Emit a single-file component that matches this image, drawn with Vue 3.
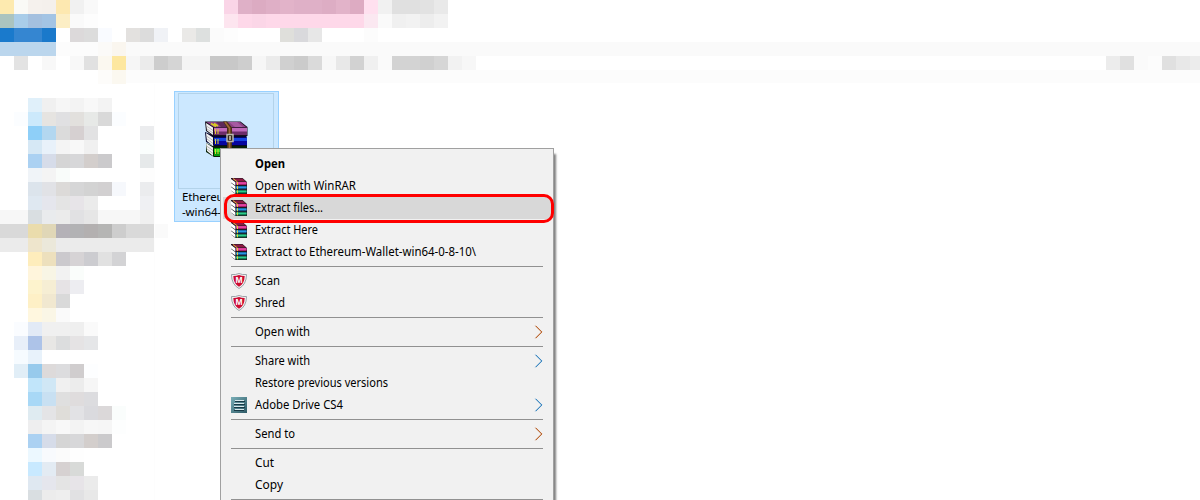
<script setup>
const CELL = 14

// Each run: [row, first column, colours of consecutive cells]
const runs = [
  [0, 0, 'fdeaaf fafaf6 f5f1ed f4f0ec fde8b0 f1f1f1 f9f9f9'],
  [0, 16, 'fad5e7 dfb0c7 dcabc2 dfafc6 e2b3c9 dfb0c7 dfb0c7 ddadc4 e2b3c9 ddabc2 ffe0ef f1f1f1 e0e0e0 e0e0e0 e2e2e2 e9e9e9'],
  [1, 0, 'abc4bf a9cde9 a4c0df a3c4e4 fceec5 fafafa fdfdfd'],
  [1, 16, 'fde5ef fed8e9 fbd6e7 fed8e9 fed8e9 fed8e9 fed8e9 fed8e9 fed8e9 fed8e9 fbe8f1 fafafa f0f0f0 f2f2f2 ededed f2f2f2'],
  [2, 0, '1a7acc 3586d1 3586d1 1a79cb'],
  [2, 5, 'dcd9da dcdcdc f9fbff'],
  [2, 9, 'e3e1df dcdcdc f0f2f6'],
  [2, 13, 'eae9e7 dde0df fbfbfb fdfdfd'],
  [2, 20, 'dfdfdb d9d9dc e7e7e7'],
  [2, 26, 'fcfcfc'],
  [3, 0, 'bbd6ed bbd6ed bbd6ed bbd6ed fcfcfc fcfcfc fcfcfc fbfaf8 faf6ef'],
  [4, 1, 'e3e3e3'],
  [4, 3, 'f8f8f8'],
  [4, 5, 'f8f8f8 e1e1e1 fbf8f0 fde79f f6f6f6 ebebeb cdcdcd d5d5d5 f4f4f4 f4f4f4 c8c8c8 c8c8c8 cecece f6f6f6 ebebeb d0d0d0 cbcbcb dadada f7f7f7 e8e8e8 d2d2d2 f0f0f0 fafafa d3d3d3 d3d3d3 d0d0d0 d6d6d6 f2f2f2 f7f7f7'],
  [4, 79, 'ececec e0e0e0 fafafa fcfcfc e0e0e0 e8e8e8 ececec'],
  [5, 7, 'fdfcfa fbf8f0'],
  [7, 2, 'e0f0fa f0f0f0 f6f6f6 f3f3f3 f8f8f8 f3f3f3'],
  [8, 1, 'fbfdff cce9fb e6e4e1 e0e0e2 e2e0dd e7e9e7 d9d9d9 fbfdff'],
  [9, 2, '8ecff8 b3d7f0 dbdbdb d6d0d1 e2e2e3'],
  [9, 10, 'ebecee'],
  [10, 2, 'd6e8f5 e8f1fa f4f4f4 f8f8f8 f0f0f0'],
  [10, 10, 'fafefd'],
  [11, 2, 'abd1f2 d6dce9 d5d5d5 d7d7d9 d3cecc cbcacc'],
  [11, 10, 'e6e9ea'],
  [12, 2, 'f0f4f8 f4f4f4 f9fcfa'],
  [12, 10, 'fdfdfd'],
  [13, 2, 'dce4ec e1e2e6 dcdad8 d6d6d7 d3d3d3 d2d0d1 f6f8fc'],
  [13, 10, 'ebecee'],
  [14, 2, 'dfe8f1 e5e6ed e4e4e4 e7e4e8 ebebeb'],
  [14, 10, 'eff0f3'],
  [15, 0, 'f7f7f7 f7f7f7 d9dee1 e9ebed ebebeb e1e1e3 e6e6e6 f7f7f7 f7f7f7 f7f7f7 f0f0f0'],
  [16, 0, 'd9d9d9 d9d9d9 eadcac e0d7b7 b4b1b7 b2b2b4 b3b0b0 b5b5b4 cdcdcd d9d9d9 d9d9d9 fafafa'],
  [17, 0, 'ebebeb ebebeb eee5cc ebe8da ebebeb ebebeb ebebeb ebebeb ebebeb ebebeb ebebeb'],
  [18, 2, 'feedbc ede0bd cbc9cd d6d3d5 ccccd0 e1e1e1 d3d3d5'],
  [19, 2, 'fff5dc f8f5e5 f2f2f2 fafdfb'],
  [20, 2, 'fdf3cd f6eed4 e6e3e5 ededf1'],
  [21, 2, 'fef0c6 f1e8d0 d9d9d9'],
  [22, 2, 'fff7df faf6e6 fafafa'],
  [23, 1, 'fafcff e2eaf6 f0f0f0 f0f0f0 efefef fafafa'],
  [24, 1, 'e8eff9 adc3e8 e8e7e5 dcddde e5e3e4 e5e6e8'],
  [25, 1, 'f6fbff e8f2fb'],
  [26, 1, 'e1eef7 97caec dddada dcdcde d0cdce fdfeff'],
  [27, 2, 'c1e5fa d0e7f5 f0f0f0 ececec f6f6f6'],
  [28, 2, 'a8d8f6 c8e0f2 dfdfdf dfdcdd dcdcdf'],
  [29, 2, 'dfebf1 e4e4e6 dfddd9 e2e2e5 dadade dbd8d9 fafdfc'],
  [30, 2, 'eeeeef f4f4f4 f8f8f8 f3f3f3 f7f7f7 f6f6f6 fdfefe'],
  [31, 2, 'abd1f2 d6dce9 d5d5d5 d7d7d9 d3cecc cbcacc'],
  [32, 2, 'ecf8ff f8fafd fbfbfb fefefe'],
  [33, 2, 'c8e9ff e3ebf3 d6d1d1 d8dad8'],
  [34, 2, 'dfe8f1 e5e6ed e4e4e4 e7e4e8 ebebeb'],
  [35, 2, 'd9dee1 ececec eeeeee e1e1e3 e8e8e8'],
]

const cells = runs.flatMap(([row, col, colours]) =>
  colours.split(' ').map((c, i) => ({ x: (col + i) * CELL, y: row * CELL, fill: '#' + c }))
)

// w is the drawn width of the label in pixels
const items = [
  { label: 'Open', w: 30, bold: true },
  { label: 'Open with WinRAR', w: 101, icon: 'rar' },
  { label: 'Extract files...', w: 68, icon: 'rar', active: true },
  { label: 'Extract Here', w: 63, icon: 'rar' },
  { label: 'Extract to Ethereum-Wallet-win64-0-8-10\\', w: 221, icon: 'rar' },
  { sep: true },
  { label: 'Scan', w: 25, icon: 'shield' },
  { label: 'Shred', w: 30, icon: 'shield' },
  { sep: true },
  { label: 'Open with', w: 55, sub: 'warm' },
  { sep: true },
  { label: 'Share with', w: 55, sub: 'cool' },
  { label: 'Restore previous versions', w: 133 },
  { label: 'Adobe Drive CS4', w: 88, icon: 'drive', sub: 'cool' },
  { sep: true },
  { label: 'Send to', w: 40, sub: 'warm' },
  { sep: true },
  { label: 'Cut', w: 19 },
  { label: 'Copy', w: 28 },
  { sep: true },
]
</script>

<template>
  <main class="screen">
    <svg class="mosaic" width="1200" height="500" shape-rendering="crispEdges">
      <rect x="126" y="42" width="1074" height="14" fill="#fafafa" />
      <rect x="126" y="70" width="1074" height="13" fill="#fcfcfc" />
      <rect v-for="(c, i) in cells" :key="i" :x="c.x" :y="c.y" width="14" height="14" :fill="c.fill" />
      <rect x="154" y="84" width="1" height="416" fill="#fdfdfd" />
    </svg>

    <section class="tile">
      <div class="thumb">
        <svg width="44" height="38" viewBox="0 0 44 38">
          <!-- bottom book -->
          <path d="M1 22 8 25h34v11H9L1 31z" fill="#062006" />
          <path d="M9 27h33v8H9z" fill="#079a0d" />
          <path d="M9 28h33v3H9z" fill="#24e72c" />
          <path d="M1 22l7 4.500v8.500l-6-5z" fill="#f3f3f3" />
          <path d="M1.500 25l6.500 4.500M2 28l6 4.500" stroke="#aaa" stroke-width=".8" fill="none" />
          <!-- middle book -->
          <path d="M0 11 8 14h33.500l.5 11H9L1 21z" fill="#07072c" />
          <path d="M9 16.500h33V24H9z" fill="#0606a0" />
          <path d="M9 17h33v3H9z" fill="#1644e4" />
          <path d="M1 12l7 4.500V25l-6-5z" fill="#f3f3f3" />
          <path d="M1.500 15l6.500 4.500M2 18l6 4.500" stroke="#aaa" stroke-width=".8" fill="none" />
          <!-- top book -->
          <path d="M0 .500h35.500L42.500 6v9H8L1 10z" fill="#17101c" />
          <path d="M1.500 1H35l6 5H8.500z" fill="#8a4185" />
          <path d="M11 1h8l5 5h-8z" fill="#5d2a5a" />
          <path d="M24 1h8l6 5h-8z" fill="#a65aa1" />
          <path d="M9 6.500h33V14H9z" fill="#6d2d69" />
          <path d="M9 7h33v3.500H9z" fill="#bf69ba" />
          <path d="M1 2l7 4.500V14l-6-4.500z" fill="#f3f3f3" />
          <path d="M1.500 5l6.500 4.500M2 8l6 4" stroke="#aaa" stroke-width=".8" fill="none" />
          <path d="M10.500 8v5M13 8v5M10.500 18v5M13 18v5M10.500 28v5M13 28v5" stroke="#e3d132" />
          <path d="M6 2.500l5 3M9 2.500l4 2.500" stroke="#d8cb22" stroke-width="1.500" />
          <!-- belt and buckle -->
          <path d="M18 .500h4l5 6V36h-5V7z" fill="#4b2f17" />
          <path d="M20 1l4.500 6v28" stroke="#a06b35" stroke-width="1.800" fill="none" />
          <path d="M22 13.500h6v7h-6z" fill="#33271a" stroke="#b9b7b0" stroke-width="1.500" />
          <path d="M25 15v4" stroke="#eee8d0" stroke-width="1.300" />
        </svg>
      </div>
      <p class="name">Ethereum-Wallet<br />-win64-0-8-10</p>
    </section>

    <nav class="menu">
      <template v-for="(it, i) in items" :key="i">
        <hr v-if="it.sep" class="sep" />
        <div v-else class="item" :class="{ active: it.active, bold: it.bold }">
          <span class="icon">
            <svg v-if="it.icon === 'rar'" width="16" height="16" viewBox="0 0 16 16">
              <path d="M0 0h11.500L16 4v12H4.500L0 12.500z" fill="#1a1a22" />
              <path d="M.8 .4h10.500L15 3.600H4.500z" fill="#8c1a42" />
              <path d="M2 .500 6.500 4" stroke="#d9b53b" />
              <path d="M5 4h10.500v3H5z" fill="#a81e6c" />
              <path d="M5 4.300h10.500v1.500H5z" fill="#f04cb0" />
              <path d="M5 8.200h10.500v3H5z" fill="#12588f" />
              <path d="M5 8.500h10.500v1.500H5z" fill="#2396e4" />
              <path d="M5 12.300h10.500v3H5z" fill="#0f7d52" />
              <path d="M5 12.600h10.500v1.500H5z" fill="#2bcc8c" />
              <path d="M0 .9l4.400 3.300v3.200L0 4.400zM0 5l4.400 3.300v3.200L0 8.500zM0 9.100l4.400 3.300v3.100L0 12.400z" fill="#fff" />
              <path d="M6.500 4v3M6.500 8.200v3M6.500 12.300v3" stroke="#e4cf38" />
            </svg>
            <svg v-else-if="it.icon === 'shield'" width="16" height="16" viewBox="0 0 16 16">
              <path d="M.5 1.500Q4.500 2 8 .500 11.500 2 15.500 1.500 15.500 11.500 8 15.500.500 11.500.500 1.500z" fill="#f4f4f4" stroke="#9ba3a9" />
              <path d="M2.300 3Q5.500 3 8 2q2.500 1 5.700 1Q13.500 10.700 8 13.800 2.500 10.700 2.300 3z" fill="#cc0c32" />
              <text class="emblem" x="8" y="9.800">M</text>
            </svg>
            <svg v-else-if="it.icon === 'drive'" width="16" height="16" viewBox="0 0 16 16">
              <defs>
                <linearGradient id="teal" x1="0" y1="0" x2="1" y2="1">
                  <stop offset="0" stop-color="#79aeb7" />
                  <stop offset="1" stop-color="#2d5965" />
                </linearGradient>
              </defs>
              <path d="M0 0h16v16H0z" fill="url(#teal)" />
              <path d="M4 4.500h10M3 7.500h11M3 10.500h11M3 13.500h10" stroke="#173945" />
              <path d="M4 3.500h9M3 6.500h10M3 9.500h10M4 12.500h9" stroke="#d8e8eb" />
            </svg>
          </span>
          <svg class="label" :width="it.w + 4" height="22">
            <text x="0" y="15" :textLength="it.w" lengthAdjust="spacingAndGlyphs">{{ it.label }}</text>
          </svg>
          <svg v-if="it.sub" class="chevron" :class="it.sub" width="9" height="14" viewBox="0 0 9 14">
            <path class="edge" d="M1.900 .8 8.100 7 1.900 13.200" />
            <path class="core" d="M1.500 .8 7.700 7 1.500 13.200" />
          </svg>
        </div>
      </template>
    </nav>
    <div class="ring"></div>
  </main>
</template>

<style>
body { background: #fff; overflow: hidden; }
</style>

<style scoped>
.screen {
  position: relative;
  width: 1200px;
  height: 500px;
  overflow: hidden;
  background: #fff;
  font-family: "Noto Sans", "Open Sans", sans-serif;
  font-size: 12px;
  color: #000;
}
.mosaic { display: block; }
.tile {
  position: absolute;
  left: 174px;
  top: 91px;
  box-sizing: border-box;
  width: 105px;
  height: 131px;
  padding: 1px 3px;
  border: 1px solid #99d1ff;
  background: #cce8ff;
}
.thumb {
  box-sizing: border-box;
  width: 96px;
  height: 96px;
  padding: 27px 0 0 26px;
  border: 1px solid #b3d3ea;
}
.thumb svg { display: block; }
.name {
  margin: 0 0 0 4px;
  font-size: 11.5px;
  line-height: 15px;
  letter-spacing: -0.1px;
  white-space: nowrap;
}
.menu {
  position: absolute;
  left: 220px;
  top: 148px;
  box-sizing: border-box;
  width: 334px;
  height: 380px;
  padding: 4px 2px;
  border: 1px solid #a0a0a0;
  background: #f1f1f1;
  box-shadow: 3px 5px 2px -1px rgba(0, 0, 0, 0.5);
}
.item {
  display: flex;
  align-items: center;
  height: 22px;
  padding: 0 8px;
}
.item.active { background: #d8d8d8; }
.icon { width: 24px; height: 16px; flex: none; }
.icon svg { display: block; }
.emblem {
  font: 700 8.5px "Liberation Sans", sans-serif;
  fill: #fff;
  text-anchor: middle;
}
.label { display: block; overflow: visible; fill: #000; }
.bold { font-weight: 700; }
.chevron { margin-left: auto; fill: none; }
.warm .edge { stroke: #c9855a; stroke-width: 0.6; }
.warm .core { stroke: #b04a08; }
.cool .edge { stroke: #3d94dc; stroke-width: 0.6; }
.cool .core { stroke: #1f74b4; }
.sep {
  height: 1px;
  margin: 3px 8px;
  border: 0;
  background: #919191;
}
.ring {
  position: absolute;
  left: 224px;
  top: 194px;
  box-sizing: border-box;
  width: 330px;
  height: 29px;
  border: 3px solid #f00;
  border-radius: 10px;
}
</style>
